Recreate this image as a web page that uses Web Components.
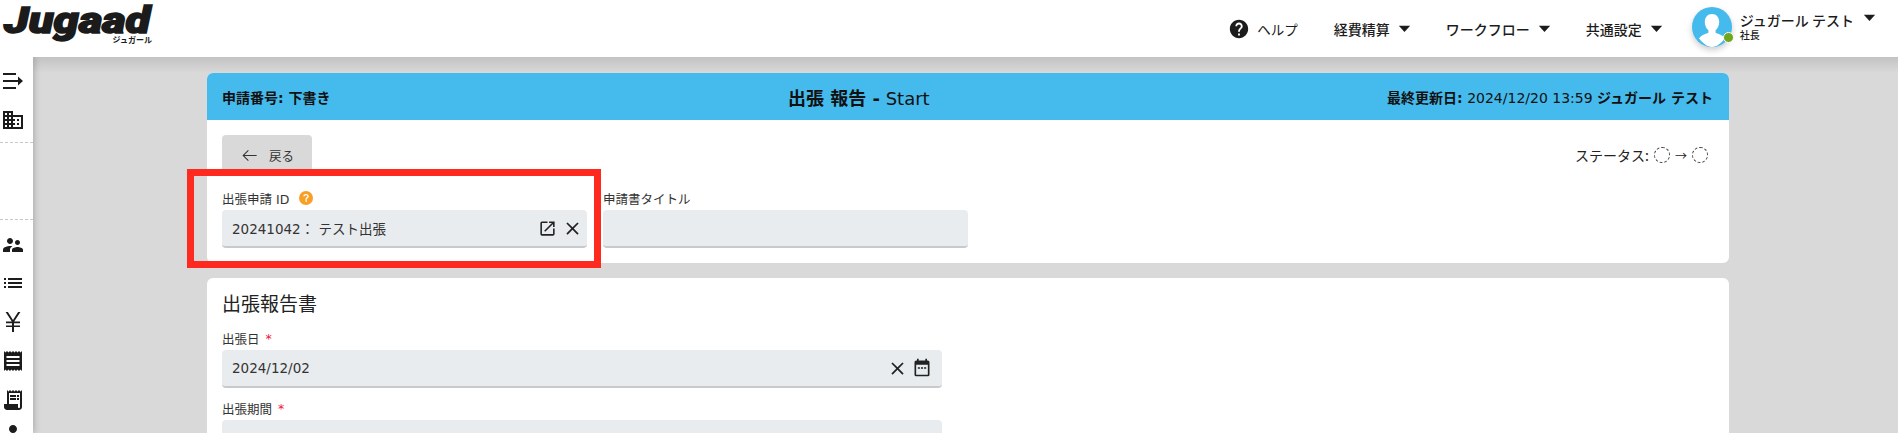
<!DOCTYPE html>
<html lang="ja">
<head>
<meta charset="utf-8">
<title>出張報告</title>
<style>
    html, body { margin: 0; height: 100%; overflow: hidden; }
    body {
        font-family: "DejaVu Sans", "Noto Sans CJK JP", sans-serif;
        color: #222;
        background: #d9d9d9;
    }
</style>
</head>
<body>
<app-shell>
    <app-header slot="header"></app-header>
    <side-bar slot="side"></side-bar>

    <report-card>
        <card-banner>
            <span slot="left">申請番号: 下書き</span>
            <span slot="center"><b>出張 報告 -</b> Start</span>
            <span slot="right"><b>最終更新日:</b> 2024/12/20 13:59 <b>ジュガール テスト</b></span>
        </card-banner>
        <top-section></top-section>
    </report-card>

    <report-card>
        <section-title>出張報告書</section-title>
        <form-field label="出張日" required wide value="2024/12/02" icons="close,calendar"></form-field>
        <form-field label="出張期間" required wide></form-field>
    </report-card>
</app-shell>

<script>
// Material style icon paths, viewBox 24
const ICONS = {
    help: 'M12 2C6.48 2 2 6.48 2 12s4.48 10 10 10 10-4.48 10-10S17.52 2 12 2zm1 17h-2v-2h2v2zm2.07-7.75l-.9.92C13.45 12.9 13 13.5 13 15h-2v-.5c0-1.1.45-2.1 1.17-2.83l1.24-1.26c.37-.36.59-.86.59-1.41 0-1.1-.9-2-2-2s-2 .9-2 2H8c0-2.21 1.79-4 4-4s4 1.79 4 4c0 .88-.36 1.68-.93 2.25z',
    caret: 'M4 8h16l-8 9z',
    back: 'M21 11.4H5.6l5.4-5.5-.9-.9-7 7 7 7 .9-.9-5.4-5.5H21z',
    open: 'M19 19H5V5h7V3H5a2 2 0 00-2 2v14a2 2 0 002 2h14c1.1 0 2-.9 2-2v-7h-2v7zM14 3v2h3.59l-9.83 9.83 1.41 1.41L19 6.41V10h2V3h-7z',
    close: 'M19 6.41L17.59 5 12 10.59 6.41 5 5 6.41 10.59 12 5 17.59 6.41 19 12 13.41 17.59 19 19 17.59 13.41 12z',
    calendar: 'M19 3h-1V1h-2v2H8V1H6v2H5a2 2 0 00-2 2v15a2 2 0 002 2h14a2 2 0 002-2V5a2 2 0 00-2-2zm0 17H5V8h14v12zM7 11h2.5v2H7zm3.75 0h2.5v2h-2.5zm3.75 0H17v2h-2.5z',
    menuarrow: 'M2 4h13v2H2zM2 18h13v2H2zM2 11h15V7.6l5 4.4-5 4.4V13H2z',
    domain: 'M12 7V3H2v18h20V7H12zM6 19H4v-2h2v2zm0-4H4v-2h2v2zm0-4H4V9h2v2zm0-4H4V5h2v2zm4 12H8v-2h2v2zm0-4H8v-2h2v2zm0-4H8V9h2v2zm0-4H8V5h2v2zm10 12h-8v-2h2v-2h-2v-2h2v-2h-2V9h8v10zm-2-8h-2v2h2v-2zm0 4h-2v2h2v-2z',
    people: 'M16.5 12c1.38 0 2.49-1.12 2.49-2.5S17.88 7 16.5 7 14 8.12 14 9.5s1.12 2.5 2.5 2.5zM9 11c1.66 0 2.99-1.34 2.99-3S10.66 5 9 5 6 6.34 6 8s1.34 3 3 3zm7.5 3c-1.83 0-5.5.92-5.5 2.75V19h11v-2.25c0-1.83-3.67-2.75-5.5-2.75zM9 13c-2.33 0-7 1.17-7 3.5V19h7v-2.25c0-.85.33-2.34 2.37-3.47C10.5 13.1 9.66 13 9 13z',
    list: 'M3 13h2v-2H3v2zm0 4h2v-2H3v2zm0-8h2V7H3v2zm4 4h14v-2H7v2zm0 4h14v-2H7v2zM7 7v2h14V7H7z',
    yen: 'M13.2 11.6H19v1.6h-6v2.2h6V17h-6v5h-2v-5H5v-1.6h6v-2.2H5v-1.6h5.8L4.6 2h2.3L12 10l5.1-8h2.3z',
    receipt: 'M21 2l-1.5 1.5L18 2l-1.5 1.5L15 2l-1.5 1.5L12 2l-1.5 1.5L9 2 7.5 3.5 6 2 4.5 3.5 3 2v20l1.5-1.5L6 22l1.5-1.5L9 22l1.5-1.5L12 22l1.5-1.5L15 22l1.5-1.5L18 22l1.5-1.5L21 22V2zM18.5 17h-13v-2h13zm0-4h-13v-2h13zm0-4h-13V7h13z',
    receiptlong: 'M19.5 3.5L18 2l-1.5 1.5L15 2l-1.5 1.5L12 2l-1.5 1.5L9 2 7.5 3.5 6 2v14H3v3c0 1.66 1.34 3 3 3h12c1.66 0 3-1.34 3-3V2l-1.5 1.5zM19 19c0 .55-.45 1-1 1s-1-.45-1-1v-3H8V5h11v14zM9 7h6v2H9zm7 0h2v2h-2zM9 10h6v2H9zm7 0h2v2h-2z',
    person: 'M12 12c2.21 0 4-1.79 4-4s-1.79-4-4-4-4 1.79-4 4 1.79 4 4 4zm0 2c-2.67 0-8 1.34-8 4v2h16v-2c0-2.66-5.33-4-8-4z'
};

class UiIcon extends HTMLElement {
    connectedCallback() {
        const size = this.getAttribute('size') || 20;
        const name = this.getAttribute('name');
        this.attachShadow({ mode: 'open' }).innerHTML = `
            <style>
                :host { display: inline-flex; flex: none; color: inherit; }
                svg { display: block; fill: currentColor; }
            </style>
            <svg width="${size}" height="${size}" viewBox="0 0 24 24"><path d="${ICONS[name]}"/></svg>`;
    }
}

class AppShell extends HTMLElement {
    constructor() {
        super();
        this.attachShadow({ mode: 'open' }).innerHTML = `
            <style>
                :host { display: flex; flex-direction: column; height: 433px; overflow: hidden; }
                .row { display: flex; flex: 1; min-height: 0; }
                main {
                    flex: 1;
                    display: flex;
                    flex-direction: column;
                    gap: 15px;
                    padding: 16px 169px 0 174px;
                    background: linear-gradient(#c4c3c4, #d9d9d9 16px);
                }
            </style>
            <slot name="header"></slot>
            <div class="row">
                <slot name="side"></slot>
                <main><slot></slot></main>
            </div>`;
    }
}

class AppHeader extends HTMLElement {
    constructor() {
        super();
        const nav = (label, gap) => `<div class="nav" style="margin-right:${gap}px">${label}<ui-icon name="caret" size="17"></ui-icon></div>`;
        this.attachShadow({ mode: 'open' }).innerHTML = `
            <style>
                :host {
                    display: flex;
                    align-items: center;
                    height: 57px;
                    background: #fff;
                    position: relative;
                    z-index: 2;
                    font-family: "Noto Sans CJK JP", sans-serif;
                    font-size: 14px;
                    color: #1c1c1c;
                }
                .logo { margin-left: 4px; width: 149px; height: 57px; display: flex; flex-direction: column; align-items: flex-end; }
                .mark {
                    font: italic 900 36px/42px Roboto, sans-serif;
                    color: #1b1b1b;
                    width: 149px;
                    height: 35px;
                    white-space: nowrap;
                    transform: scaleX(1.26);
                    transform-origin: left top;
                    -webkit-text-stroke: 1.5px #1b1b1b;
                }
                .kana { font-size: 8px; line-height: 9px; font-weight: 700; margin-right: 1px; }
                .space { flex: 1; }
                .help { display: flex; align-items: center; gap: 7px; margin-right: 36px; font-size: 13.5px; }
                .nav { display: flex; align-items: center; gap: 6px; font-weight: 500; }
                .user { display: flex; align-items: flex-start; margin: 0 20px 3px 0; }
                .avatar {
                    width: 40px; height: 40px; border-radius: 50%;
                    background: #45baec;
                    position: relative;
                    box-shadow: 0 3px 6px rgba(0,0,0,.2);
                    margin-right: 8px;
                }
                .avatar svg { display: block; border-radius: 50%; }
                .dot {
                    position: absolute; right: -2px; bottom: 4px;
                    width: 9px; height: 9px; border-radius: 50%;
                    background: #6fa61f; border: 1px solid #fff;
                }
                .who { display: flex; flex-direction: column; padding-top: 3px; }
                .name { display: flex; align-items: flex-start; gap: 7px; line-height: 20px; font-weight: 500; }
                .name ui-icon { margin-top: -1px; }
                .role { font-size: 10px; line-height: 10px; font-weight: 500; }
            </style>
            <div class="logo">
                <div class="mark">Jugaad</div>
                <div class="kana">ジュガール</div>
            </div>
            <div class="space"></div>
            <div class="help"><ui-icon name="help" size="22"></ui-icon>ヘルプ</div>
            ${nav('経費精算', 33)}
            ${nav('ワークフロー', 33)}
            ${nav('共通設定', 27)}
            <div class="user">
                <div class="avatar">
                    <svg width="40" height="40" viewBox="0 0 40 40">
                        <path fill="#fff" d="M20 7c-4.4 0-7.2 3.4-7.2 8 0 3.6 1.5 6.6 3.6 8.2v2.6c-3 1.2-7.2 2.6-9.4 5.4C10.400 35.600 15 40 20 40s9.600-4.400 13-8.800c-2.200-2.800-6.400-4.200-9.400-5.400v-2.600c2.100-1.600 3.600-4.600 3.600-8.200 0-4.600-2.800-8-7.200-8z"/>
                    </svg>
                    <span class="dot"></span>
                </div>
                <div class="who">
                    <div class="name">ジュガール テスト<ui-icon name="caret" size="17"></ui-icon></div>
                    <div class="role">社長</div>
                </div>
            </div>`;
    }
}

class SideBar extends HTMLElement {
    constructor() {
        super();
        const item = (name, mt) => `<ui-icon name="${name}" size="24" style="margin-top:${mt}px"></ui-icon>`;
        this.attachShadow({ mode: 'open' }).innerHTML = `
            <style>
                :host {
                    display: flex;
                    flex-direction: column;
                    align-items: center;
                    width: 33px;
                    background: #fff;
                    box-shadow: 2px 0 6px rgba(0,0,0,.18);
                    color: #1c1c1c;
                    position: relative;
                    z-index: 1;
                }
                hr { width: 100%; margin: 0; border: 0; border-top: 1px dashed #c8c8c8; }
                ui-icon { margin-left: -8px; }
            </style>
            ${item('menuarrow', 12)}
            ${item('domain', 15)}
            <hr style="margin-top:10px">
            <hr style="margin-top:76px">
            ${item('people', 13)}
            ${item('list', 14)}
            ${item('yen', 15)}
            ${item('receipt', 15)}
            ${item('receiptlong', 15)}
            ${item('person', 9)}`;
    }
}

class ReportCard extends HTMLElement {
    constructor() {
        super();
        this.attachShadow({ mode: 'open' }).innerHTML = `
            <style>
                :host {
                    display: block;
                    background: #fff;
                    border-radius: 6px;
                    position: relative;
                    flex: none;
                }
            </style>
            <slot></slot>`;
    }
}

class CardBanner extends HTMLElement {
    constructor() {
        super();
        this.attachShadow({ mode: 'open' }).innerHTML = `
            <style>
                :host {
                    display: flex;
                    justify-content: space-between;
                    align-items: center;
                    height: 47px;
                    padding: 0 16px 0 15px;
                    background: #45baec;
                    border-radius: 6px 6px 0 0;
                    color: #111;
                    font-size: 14px;
                }
                .l { font-weight: 700; }
                .c { font-size: 18px; }
            </style>
            <div class="l"><slot name="left"></slot></div>
            <div class="c"><slot name="center"></slot></div>
            <div class="r"><slot name="right"></slot></div>`;
    }
}

class TopSection extends HTMLElement {
    constructor() {
        super();
        this.attachShadow({ mode: 'open' }).innerHTML = `
            <style>
                :host { display: block; padding: 15px; position: relative; height: 113px; }
                .bar { display: flex; justify-content: space-between; align-items: center; height: 40px; margin-bottom: 14px; }
                .back {
                    display: flex; align-items: center; justify-content: center; gap: 10px;
                    width: 90px; height: 40px;
                    background: #d9d9d9; border-radius: 4px 4px 0 0;
                    font-size: 12.5px; color: #333;
                    font-family: "Noto Sans CJK JP", sans-serif;
                }
                .status { display: flex; align-items: center; gap: 3px; font-size: 14px; margin-right: 6px; font-family: "Noto Sans CJK JP", sans-serif; }
                .status .txt { margin-right: 2px; }
                .ring { width: 14px; height: 14px; border: 1px dashed #444; border-radius: 50%; }
                .arrow { font-size: 12px; margin: 0 2px; }
                .fields { display: flex; gap: 16px; }
                /* red annotation over the first field */
                .mark {
                    position: absolute;
                    left: -20px; top: 49px;
                    width: 400px; height: 85px;
                    border: 7px solid #ff2a1f;
                    pointer-events: none;
                }
            </style>
            <div class="bar">
                <div class="back"><ui-icon name="back" size="19"></ui-icon>戻る</div>
                <div class="status"><span class="txt">ステータス:</span><span class="ring"></span><span class="arrow">→</span><span class="ring"></span></div>
            </div>
            <div class="fields">
                <form-field label="出張申請 ID" hint value="20241042： テスト出張" icons="open,close"></form-field>
                <form-field label="申請書タイトル"></form-field>
            </div>
            <div class="mark"></div>`;
    }
}

class SectionTitle extends HTMLElement {
    constructor() {
        super();
        this.attachShadow({ mode: 'open' }).innerHTML = `
            <style>
                :host {
                    display: block;
                    padding: 12px 15px 13px;
                    font: 400 19px/26px "Noto Sans CJK JP", sans-serif;
                    color: #222;
                }
            </style>
            <slot></slot>`;
    }
}

class FormField extends HTMLElement {
    connectedCallback() {
        const wide = this.hasAttribute('wide');
        const value = this.getAttribute('value') || '';
        const icons = (this.getAttribute('icons') || '').split(',').filter(Boolean);
        const req = this.hasAttribute('required') ? '<span class="req">*</span>' : '';
        const hint = this.hasAttribute('hint')
            ? '<svg class="hint" width="14" height="14" viewBox="0 0 24 24"><circle cx="12" cy="12" r="12" fill="#f7a025"/><path fill="#fff" d="M11 16h2.600v2.600H11zM12 5c-2.800 0-4.700 1.700-4.800 4.200h2.500c.1-1.200 1-2 2.300-2s2.100.7 2.100 1.800c0 1-.6 1.500-1.500 2.100-1.400 1-1.800 1.800-1.700 3.700h2.500c0-1.200.3-1.700 1.300-2.400 1.200-.9 2-1.800 2-3.400C16.700 6.600 14.800 5 12 5z"/></svg>'
            : '';
        const iconSize = { open: 19, close: 21, calendar: 20 };
        this.attachShadow({ mode: 'open' }).innerHTML = `
            <style>
                :host {
                    display: block;
                    width: ${wide ? '720px' : '365px'};
                    margin: ${wide ? '0 0 11px 15px' : '0'};
                    flex: none;
                }
                .label {
                    display: flex; align-items: center; gap: ${this.hasAttribute('hint') ? 10 : 7}px;
                    height: 18px; margin-bottom: 3px;
                    font-size: 12.5px; color: #333;
                }
                .req { color: #f0143c; margin-left: -1px; }
                .box {
                    display: flex; align-items: center;
                    box-sizing: border-box;
                    height: 38px;
                    padding: 0 ${wide ? 9 : 4}px 0 10px;
                    background: #e9ecef;
                    border-bottom: 2px solid #c9c9c9;
                    border-radius: 4px;
                    font-size: 13.5px;
                    color: #333;
                }
                .value { flex: 1; white-space: pre; }
                .tools { display: flex; align-items: center; gap: 3px; color: #222; }
                .tools ui-icon { width: 22px; justify-content: center; }
            </style>
            <div class="label"><span>${this.getAttribute('label')}</span>${req}${hint}</div>
            <div class="box">
                <span class="value">${value}</span>
                <span class="tools">${icons.map(n => `<ui-icon name="${n}" size="${iconSize[n]}"></ui-icon>`).join('')}</span>
            </div>`;
    }
}

customElements.define('ui-icon', UiIcon);
customElements.define('app-shell', AppShell);
customElements.define('app-header', AppHeader);
customElements.define('side-bar', SideBar);
customElements.define('report-card', ReportCard);
customElements.define('card-banner', CardBanner);
customElements.define('top-section', TopSection);
customElements.define('section-title', SectionTitle);
customElements.define('form-field', FormField);
</script>
</body>
</html>
